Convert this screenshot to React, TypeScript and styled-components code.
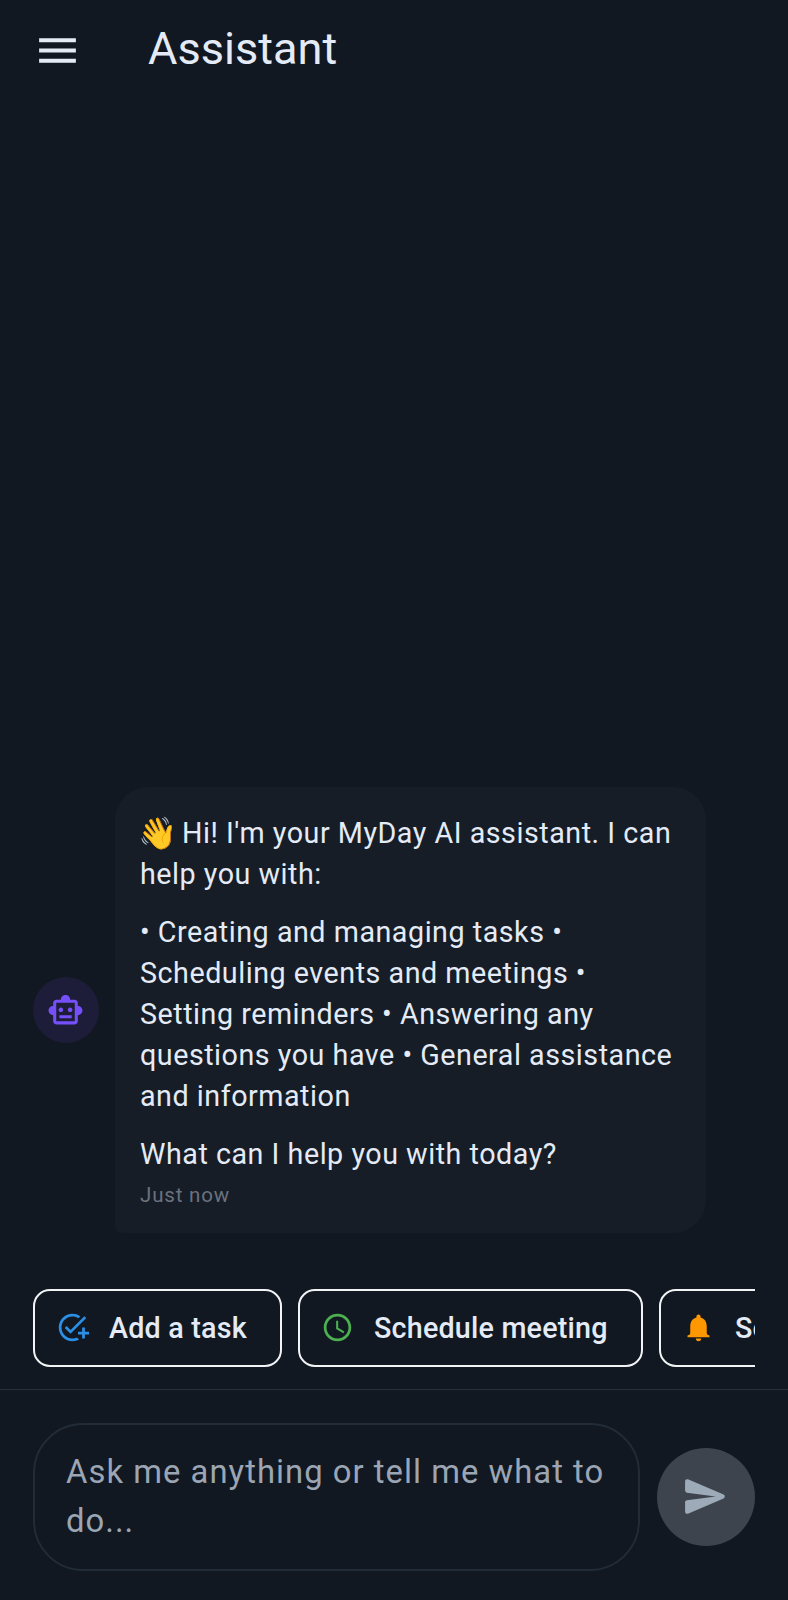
import React from 'react';
import styled, { createGlobalStyle } from 'styled-components';
import { MdMenu, MdOutlineSmartToy, MdOutlineAddTask, MdAccessTime } from 'react-icons/md';

const GlobalStyle = createGlobalStyle`
  * { box-sizing: border-box; }
  body { margin: 0; background: #111821; }
`;

const Screen = styled.div`
  width: 788px;
  height: 1600px;
  display: flex;
  flex-direction: column;
  overflow: hidden;
  background: #111821;
  color: #e4ebf7;
  font-family: Roboto, 'Liberation Sans', sans-serif;
`;

const AppBar = styled.header`
  display: flex;
  align-items: center;
  height: 100px;
  padding-left: 33px;
  flex: none;
`;

const MenuButton = styled.button`
  display: flex;
  padding: 0;
  border: 0;
  background: none;
  color: #e4ebf7;
`;

const Title = styled.h1`
  margin: 0 0 2px 66px;
  font-size: 45.1px;
  line-height: 58px;
  font-weight: 400;
`;

const Conversation = styled.main`
  flex: 1;
  display: flex;
  flex-direction: column;
  justify-content: flex-end;
  padding: 0 33px 56px;
`;

const MessageRow = styled.div`
  display: flex;
  align-items: center;
  gap: 16px;
`;

const Avatar = styled.div`
  width: 66px;
  height: 66px;
  flex: none;
  display: flex;
  align-items: center;
  justify-content: center;
  padding-right: 1px;
  border-radius: 50%;
  background: #1e1d39;
  color: #7550f8;
`;

const Bubble = styled.article`
  width: 591px;
  height: 446px;
  padding: 26px 25px 0;
  border-radius: 33px 33px 33px 8px;
  background: #161d26;
`;

const Paragraph = styled.p`
  margin: 0 0 16.8px;
  font-size: 28.7px;
  line-height: 41.04px;
  letter-spacing: 0.52px;
  white-space: nowrap;
  &:last-of-type { margin-bottom: 7px; }
`;

const Wave = styled.span`
  display: inline-block;
  width: 34.5px;
  height: 41px;
  margin-left: -2px;
  margin-right: 1.8px;
  font-size: 31.5px;
  letter-spacing: 0;
  vertical-align: top;
`;

const Timestamp = styled.time`
  display: block;
  font-size: 20.5px;
  line-height: 27px;
  letter-spacing: 0.82px;
  color: #6b7280;
`;

const Suggestions = styled.div`
  display: flex;
  gap: 16px;
  height: 78px;
  margin: 0 33px 22px;
  overflow: hidden;
  flex: none;
`;

const Chip = styled.button<{ $width: number }>`
  flex: none;
  display: flex;
  align-items: center;
  width: ${(p) => p.$width}px;
  padding: 0 0 0 20.5px;
  border: 2px solid #f1f3f5;
  border-radius: 17px;
  background: transparent;
  color: #e4ebf7;
  font: 500 28.7px/41px Roboto, 'Liberation Sans', sans-serif;
  letter-spacing: 0.2px;
  white-space: nowrap;
`;

const ChipIcon = styled.span<{ $color: string }>`
  display: flex;
  margin-right: 20.5px;
  padding-bottom: 1px;
  color: ${(p) => p.$color};
`;

const Composer = styled.footer`
  display: flex;
  align-items: center;
  gap: 17px;
  height: 211px;
  padding: 3px 33px 0;
  border-top: 1px solid #29303b;
  flex: none;
`;

const Field = styled.div`
  width: 607px;
  height: 148px;
  padding: 23px 31px;
  border: 2px solid #222b38;
  border-radius: 50px;
  font-size: 32.8px;
  line-height: 49.2px;
  letter-spacing: 1.03px;
  color: #9ba5b3;
  white-space: nowrap;
`;

const SendButton = styled.button`
  width: 98px;
  height: 98px;
  display: flex;
  align-items: center;
  justify-content: center;
  padding: 0 1px 0 0;
  border: 0;
  border-radius: 50%;
  background: #3d444d;
  color: #9dabb9;
`;

const BellIcon = () => (
  <svg width="33" height="33" viewBox="0 0 24 24" fill="currentColor">
    <path d="M12 22c1.1 0 2-.9 2-2h-4c0 1.1.9 2 2 2z" />
    <path d="M18 11v4.8c0 .9.4 1.4 1.1 1.7l.9.4V19H4v-1.1l.9-.4c.7-.3 1.1-.8 1.1-1.7V11c0-3.08 1.63-5.64 4.5-6.32V4c0-.83.67-1.5 1.5-1.5s1.5.67 1.5 1.5v.68C16.36 5.36 18 7.93 18 11z" />
  </svg>
);

const SendIcon = () => (
  <svg width="49" height="49" viewBox="0 0 24 24" fill="currentColor">
    <path d="M3.4 20.4l17.45-7.48c.81-.35.81-1.49 0-1.84L3.4 3.6c-.66-.29-1.39.2-1.39.91L2 9.12c0 .5.37.93.87.99L17 12 2.87 13.88c-.5.07-.87.5-.87 1l.01 4.61c0 .71.73 1.2 1.39.91z" />
  </svg>
);

export default function App() {
  return (
    <Screen>
      <GlobalStyle />
      <AppBar>
        <MenuButton aria-label="Menu"><MdMenu size={49} /></MenuButton>
        <Title>Assistant</Title>
      </AppBar>
      <Conversation>
        <MessageRow>
          <Avatar><MdOutlineSmartToy size={37} /></Avatar>
          <Bubble>
            <Paragraph><Wave>👋</Wave> Hi! I'm your MyDay AI assistant. I can<br />help you with:</Paragraph>
            <Paragraph>
              • Creating and managing tasks •<br />
              Scheduling events and meetings •<br />
              Setting reminders • Answering any<br />
              questions you have • General assistance<br />
              and information
            </Paragraph>
            <Paragraph>What can I help you with today?</Paragraph>
            <Timestamp>Just now</Timestamp>
          </Bubble>
        </MessageRow>
      </Conversation>
      <Suggestions>
        <Chip $width={249}><ChipIcon $color="#2b8fe6"><MdOutlineAddTask size={33} /></ChipIcon>Add a task</Chip>
        <Chip $width={345}><ChipIcon $color="#4caf50"><MdAccessTime size={33} /></ChipIcon>Schedule meeting</Chip>
        <Chip $width={300}><ChipIcon $color="#ff9800"><BellIcon /></ChipIcon>Set reminder</Chip>
      </Suggestions>
      <Composer>
        <Field>Ask me anything or tell me what to<br />do...</Field>
        <SendButton aria-label="Send"><SendIcon /></SendButton>
      </Composer>
    </Screen>
  );
}
